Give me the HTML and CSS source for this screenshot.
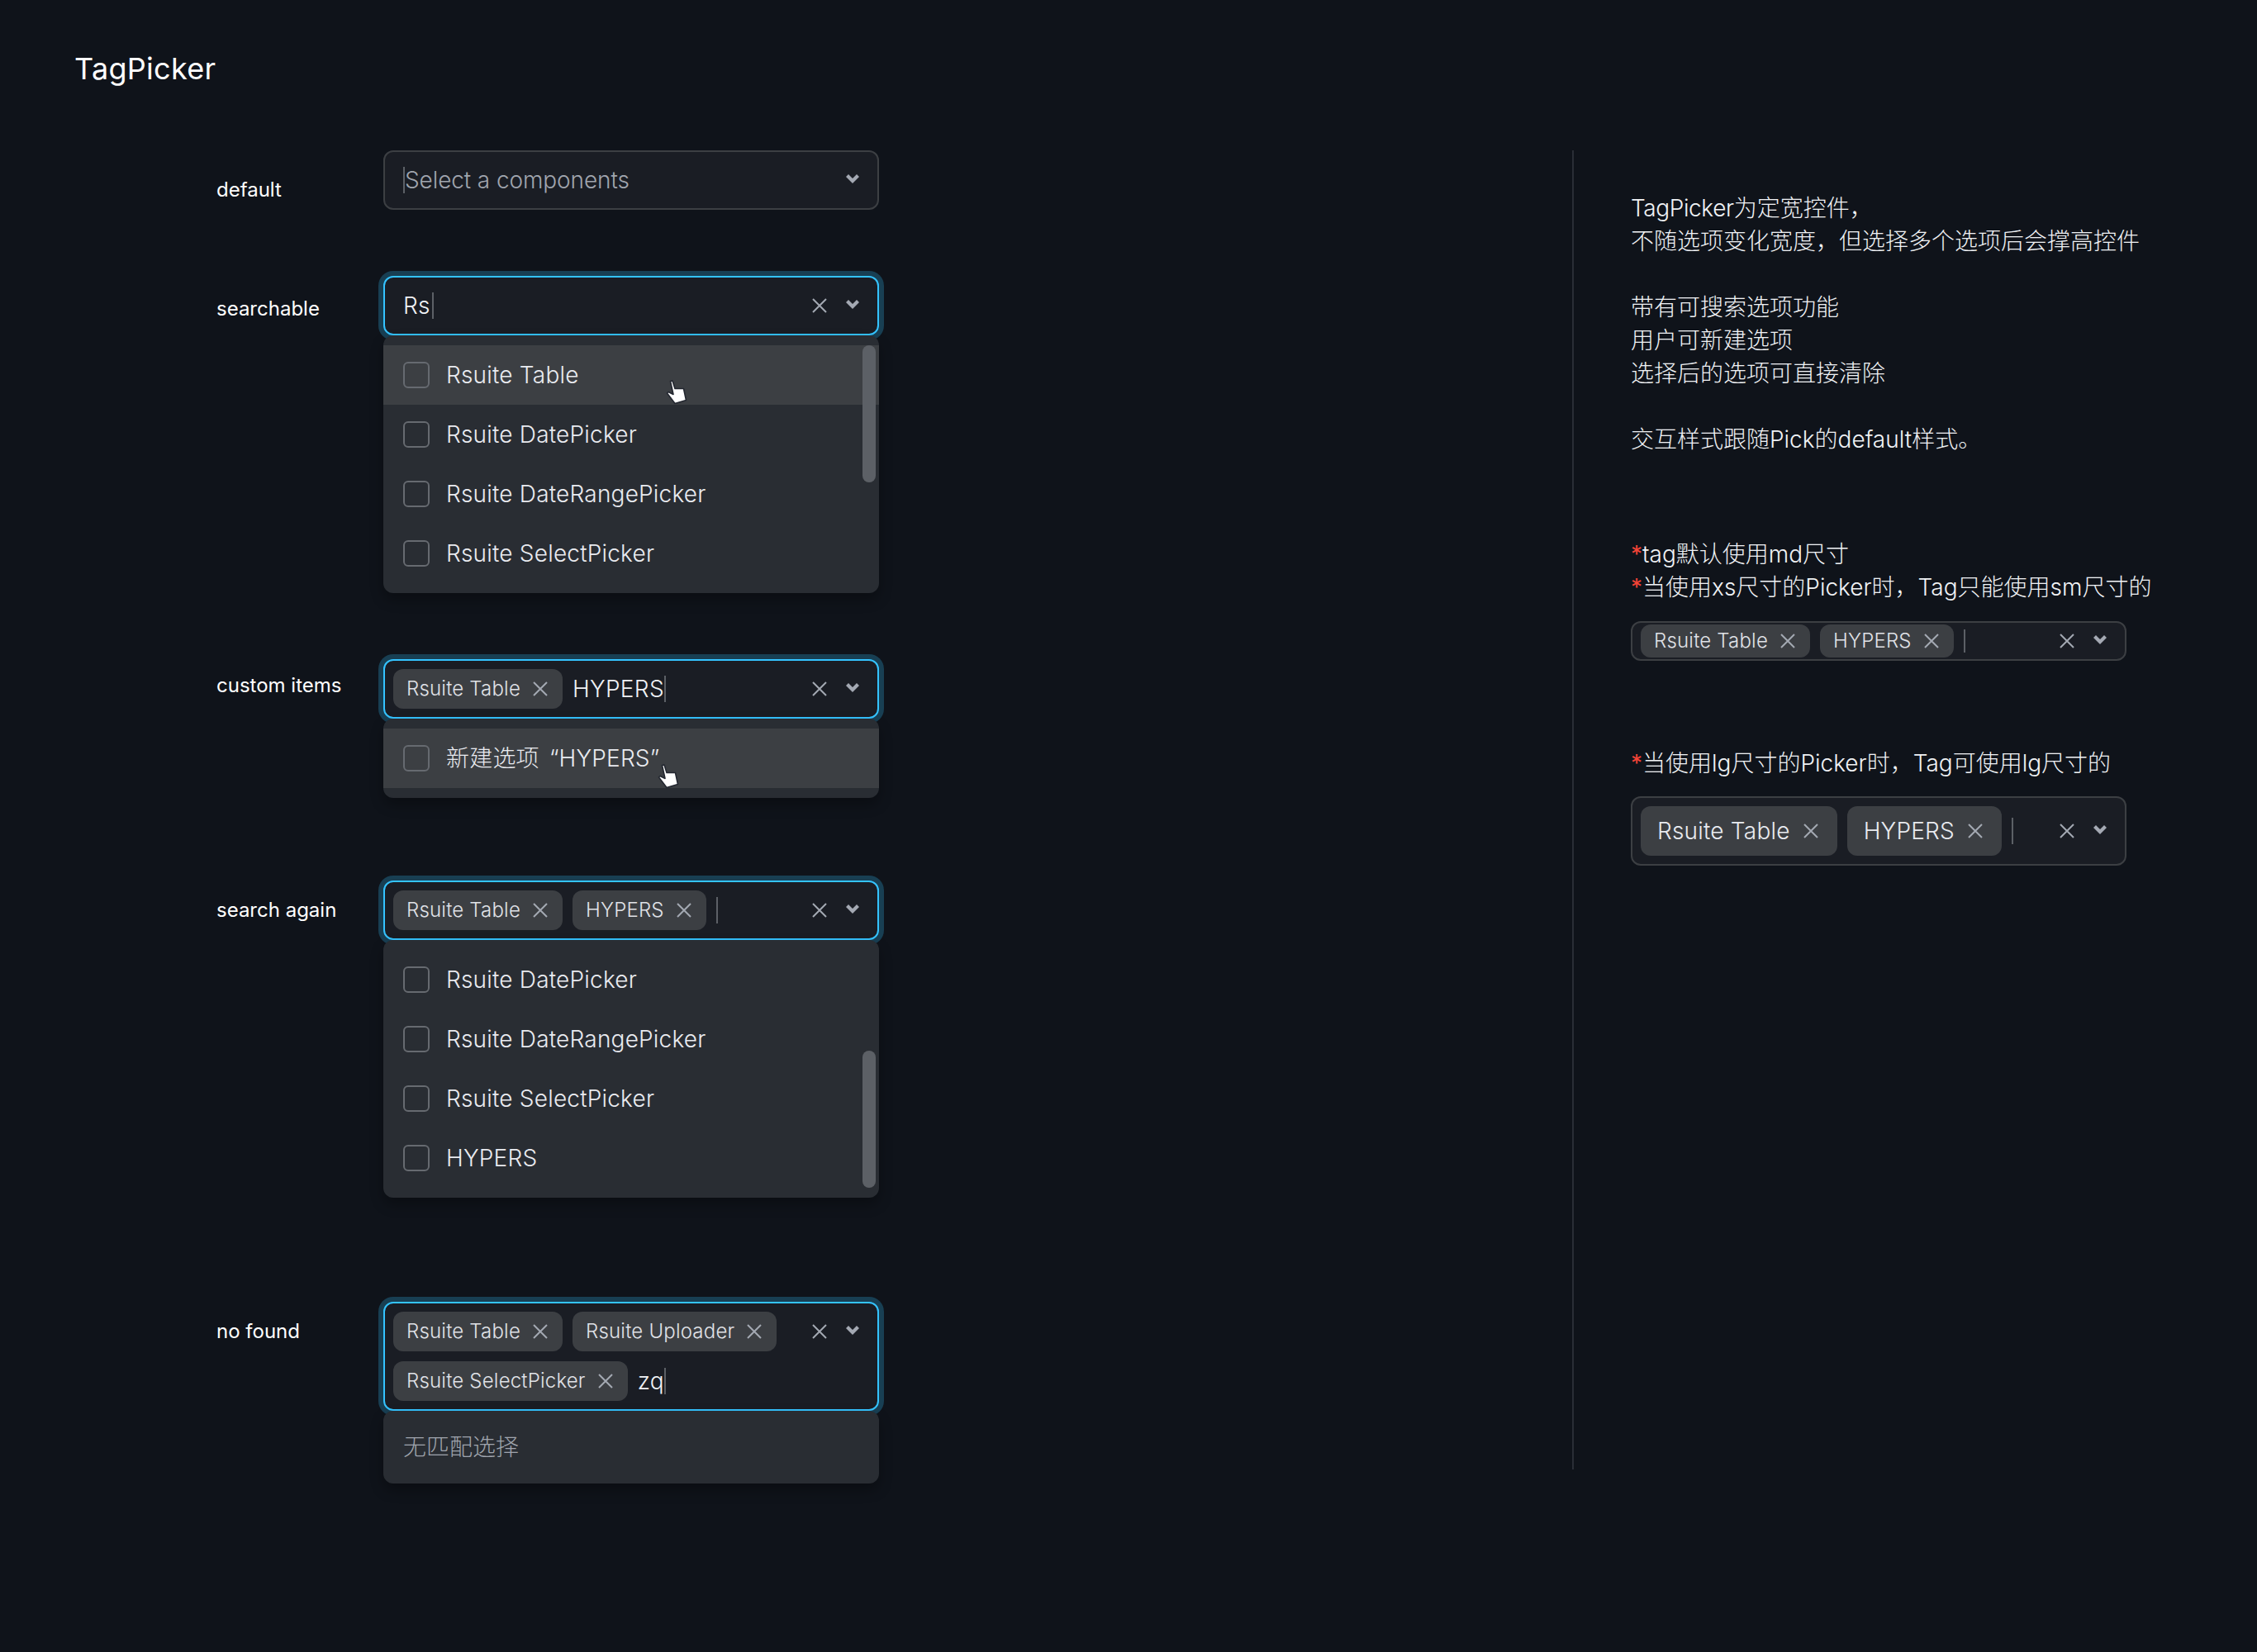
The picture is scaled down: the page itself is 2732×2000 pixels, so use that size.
FILE: index.html
```html
<!DOCTYPE html>
<html lang="zh-CN">
<head>
    <meta charset="utf-8" />
    <title>TagPicker</title>
    <link rel="stylesheet" href="styles.css">
</head>
<body>
    <svg class="icon-defs" width="0" height="0">
        <defs>
            <symbol id="icon-close" viewBox="0 0 18 18"><path d="M1 1 17 17M17 1 1 17" fill="none" stroke="currentColor" stroke-width="2"/></symbol>
            <symbol id="icon-down" viewBox="0 0 16 11"><path d="M0 3 3 0 8 5 13 0 16 3 8 11Z" fill="currentColor"/></symbol>
            <symbol id="icon-hand" viewBox="0 0 26 30"><path d="M5.500 1.500 8 1 11 10.500 21.500 10.500 24.500 24.500 11 28.500 1.500 16 3 14.500 9 17.500Z" fill="#fff" stroke="#232730" stroke-width="1.600" stroke-linejoin="round"/></symbol>
        </defs>
    </svg>

    <h1 class="page-title">TagPicker</h1>

    <main class="content">
        <section class="demos">
            <div class="row row-default">
                <div class="row-label">default</div>
                <div class="row-body">
                    <div class="picker">
                        <div class="picker-value">
                            <span class="caret caret-before"></span><span class="placeholder">Select a components</span>
                        </div>
                        <div class="picker-actions">
                            <svg class="icon-down"><use href="#icon-down"/></svg>
                        </div>
                    </div>
                </div>
            </div>

            <div class="row row-searchable">
                <div class="row-label">searchable</div>
                <div class="row-body">
                    <div class="picker picker-focus">
                        <div class="picker-value">
                            <span class="typed">Rs</span><span class="caret"></span>
                        </div>
                        <div class="picker-actions">
                            <svg class="icon-close"><use href="#icon-close"/></svg>
                            <svg class="icon-down"><use href="#icon-down"/></svg>
                        </div>
                    </div>
                    <div class="menu">
                        <div class="option option-hover"><span class="check"></span>Rsuite Table</div>
                        <div class="option"><span class="check"></span>Rsuite DatePicker</div>
                        <div class="option"><span class="check"></span>Rsuite DateRangePicker</div>
                        <div class="option"><span class="check"></span>Rsuite SelectPicker</div>
                        <div class="scroll-thumb scroll-top"></div>
                        <svg class="hand hand-one"><use href="#icon-hand"/></svg>
                    </div>
                </div>
            </div>

            <div class="row row-custom">
                <div class="row-label">custom items</div>
                <div class="row-body">
                    <div class="picker picker-focus">
                        <div class="picker-value">
                            <span class="tag">Rsuite Table<svg class="icon-close"><use href="#icon-close"/></svg></span>
                            <span class="typed-wrap"><span class="typed">HYPERS</span><span class="caret"></span></span>
                        </div>
                        <div class="picker-actions">
                            <svg class="icon-close"><use href="#icon-close"/></svg>
                            <svg class="icon-down"><use href="#icon-down"/></svg>
                        </div>
                    </div>
                    <div class="menu">
                        <div class="option option-hover option-new"><span class="check"></span>新建选项 “HYPERS”</div>
                        <svg class="hand hand-two"><use href="#icon-hand"/></svg>
                    </div>
                </div>
            </div>

            <div class="row row-again">
                <div class="row-label">search again</div>
                <div class="row-body">
                    <div class="picker picker-focus">
                        <div class="picker-value">
                            <span class="tag">Rsuite Table<svg class="icon-close"><use href="#icon-close"/></svg></span>
                            <span class="tag">HYPERS<svg class="icon-close"><use href="#icon-close"/></svg></span>
                            <span class="typed-wrap"><span class="caret"></span></span>
                        </div>
                        <div class="picker-actions">
                            <svg class="icon-close"><use href="#icon-close"/></svg>
                            <svg class="icon-down"><use href="#icon-down"/></svg>
                        </div>
                    </div>
                    <div class="menu">
                        <div class="option"><span class="check"></span>Rsuite DatePicker</div>
                        <div class="option"><span class="check"></span>Rsuite DateRangePicker</div>
                        <div class="option"><span class="check"></span>Rsuite SelectPicker</div>
                        <div class="option"><span class="check"></span>HYPERS</div>
                        <div class="scroll-thumb scroll-bottom"></div>
                    </div>
                </div>
            </div>

            <div class="row row-nofound">
                <div class="row-label">no found</div>
                <div class="row-body">
                    <div class="picker picker-focus">
                        <div class="picker-value">
                            <span class="tag">Rsuite Table<svg class="icon-close"><use href="#icon-close"/></svg></span>
                            <span class="tag">Rsuite Uploader<svg class="icon-close"><use href="#icon-close"/></svg></span>
                            <span class="tag">Rsuite SelectPicker<svg class="icon-close"><use href="#icon-close"/></svg></span>
                            <span class="typed-wrap"><span class="typed">zq</span><span class="caret"></span></span>
                        </div>
                        <div class="picker-actions">
                            <svg class="icon-close"><use href="#icon-close"/></svg>
                            <svg class="icon-down"><use href="#icon-down"/></svg>
                        </div>
                    </div>
                    <div class="menu menu-empty">无匹配选择</div>
                </div>
            </div>
        </section>

        <aside class="notes">
            <p class="note note-intro"><span class="en">TagPicker</span>为定宽控件，<br>不随选项变化宽度，但选择多个选项后会撑高控件</p>
            <p class="note note-block">带有可搜索选项功能<br>用户可新建选项<br>选择后的选项可直接清除</p>
            <p class="note note-block">交互样式跟随Pick的default样式。</p>

            <p class="note note-sizes"><span class="star">*</span>tag默认使用md尺寸<br><span class="star">*</span>当使用xs尺寸的Picker时，Tag只能使用sm尺寸的</p>
            <div class="picker picker-xs">
                <div class="picker-value">
                    <span class="tag tag-sm">Rsuite Table<svg class="icon-close"><use href="#icon-close"/></svg></span>
                    <span class="tag tag-sm">HYPERS<svg class="icon-close"><use href="#icon-close"/></svg></span>
                    <span class="typed-wrap"><span class="caret"></span></span>
                </div>
                <div class="picker-actions">
                    <svg class="icon-close"><use href="#icon-close"/></svg>
                    <svg class="icon-down"><use href="#icon-down"/></svg>
                </div>
            </div>

            <p class="note note-large"><span class="star">*</span>当使用lg尺寸的Picker时，Tag可使用lg尺寸的</p>
            <div class="picker picker-lg">
                <div class="picker-value">
                    <span class="tag tag-lg">Rsuite Table<svg class="icon-close"><use href="#icon-close"/></svg></span>
                    <span class="tag tag-lg">HYPERS<svg class="icon-close"><use href="#icon-close"/></svg></span>
                    <span class="typed-wrap"><span class="caret"></span></span>
                </div>
                <div class="picker-actions">
                    <svg class="icon-close"><use href="#icon-close"/></svg>
                    <svg class="icon-down"><use href="#icon-down"/></svg>
                </div>
            </div>
        </aside>
    </main>
</body>
</html>
```

FILE: styles.css
```css
*{
    box-sizing: border-box;
}
body{
    margin: 0;
    min-height: 2000px;
    background: #0f131a;
    color: #e9ebf0;
    font-family: "Inter", "Noto Sans CJK SC", sans-serif;
    font-size: 28px;
    line-height: 40px;
    font-weight: 300;
}
.icon-defs{
    position: absolute;
}
.page-title{
    margin: 0;
    padding: 60px 0 0 90px;
    height: 182px;
    font-size: 36px;
    line-height: 46px;
    font-weight: 400;
    letter-spacing: .3px;
    color: #fff;
}
.content{
    display: flex;
    padding-left: 262px;
}
.demos{
    flex: 0 0 1641px;
}
.row{
    display: flex;
    align-items: flex-start;
}
.row-label{
    width: 202px;
    font-size: 24px;
    line-height: 32px;
    font-weight: 400;
    color: #fff;
}
.row-body{
    width: 600px;
}
.row-default .row-label{ padding-top: 32px; }
.row-searchable{ margin-top: 80px; }
.row-searchable .row-label{ padding-top: 24px; }
.row-custom{ margin-top: 80px; }
.row-custom .row-label{ padding-top: 16px; }
.row-again{ margin-top: 100px; }
.row-again .row-label{ padding-top: 20px; }
.row-nofound{ margin-top: 126px; }
.row-nofound .row-label{ padding-top: 20px; }

/* picker */
.picker{
    display: flex;
    align-items: flex-start;
    padding: 10px;
    border: 2px solid #3c3f43;
    border-radius: 12px;
    background: #1a1d24;
}
.picker-focus{
    border-color: #34c3ff;
    box-shadow: 0 0 0 6px rgba(52,195,255,.25);
}
.picker-value{
    flex: 1;
    display: flex;
    flex-wrap: wrap;
    align-items: center;
    gap: 12px;
    min-height: 48px;
    padding-right: 20px;
}
.picker-value > .caret-before, .picker-value > .placeholder{
    margin-right: -12px;
}
.picker-value > .typed{
    margin-right: -10px;
}
.picker-value > .caret:first-child, .picker-value > .typed:first-child{
    margin-left: 12px;
}
.placeholder{
    color: #a0a5ae;
    font-size: 28px;
    letter-spacing: -.1px;
}
.typed{
    color: #f0f2f5;
    letter-spacing: .3px;
}
.typed-wrap{
    display: flex;
    align-items: center;
    height: 48px;
}
.caret{
    display: inline-block;
    width: 2px;
    height: 32px;
    background: #5c6066;
}
.picker-actions{
    display: flex;
    align-items: center;
    gap: 23px;
    height: 48px;
    padding-right: 12px;
    color: #a4a9b3;
}
.icon-close{
    width: 18px;
    height: 18px;
}
.icon-down{
    width: 16px;
    height: 11px;
    margin-top: -4px;
}

/* tags */
.tag{
    display: inline-flex;
    align-items: center;
    gap: 15px;
    height: 48px;
    padding: 0 18px 0 16px;
    border-radius: 12px;
    background: #3c3f43;
    color: #e0e2e7;
    font-size: 24px;
    letter-spacing: .2px;
    white-space: nowrap;
}
.tag .icon-close{
    color: #a4a9b3;
}
.tag-sm{
    height: 40px;
}
.tag-lg{
    height: 60px;
    font-size: 28px;
    padding: 0 23px 0 20px;
    gap: 16px;
    color: #e9ebf0;
}

/* drop menu */
.menu{
    position: relative;
    padding: 12px 0;
    border-radius: 12px;
    background: #292d33;
    box-shadow: 0 8px 16px rgba(0,0,0,.3);
}
.option{
    display: flex;
    align-items: center;
    gap: 20px;
    height: 72px;
    padding-left: 24px;
    color: #e9ebf0;
    letter-spacing: .2px;
}
.option-hover{
    background: #3c3f43;
}
.option-new{
    word-spacing: 4px;
}
.check{
    width: 32px;
    height: 32px;
    border: 2px solid #666a70;
    border-radius: 6px;
}
.menu-empty{
    height: 88px;
    padding: 24px;
    color: #a0a5ae;
}
.scroll-thumb{
    position: absolute;
    right: 4px;
    width: 16px;
    border-radius: 8px;
    background: #5c6066;
}
.scroll-top{
    top: 12px;
    height: 166px;
}
.scroll-bottom{
    top: 134px;
    height: 166px;
}
.hand{
    position: absolute;
    width: 26px;
    height: 30px;
}
.hand-one{
    left: 342px;
    top: 54px;
}
.hand-two{
    left: 332px;
    top: 55px;
}

/* right hand notes */
.notes{
    width: 700px;
    height: 1597px;
    padding: 50px 0 0 69px;
    border-left: 2px solid #2a2e36;
    color: #f0f2f5;
}
.note{
    margin: 0;
    white-space: nowrap;
}
.note .en{
    letter-spacing: -.4px;
}
.note-block{
    margin-top: 40px;
}
.note-sizes{
    margin-top: 99px;
}
.note-large{
    margin-top: 104px;
}
.star{
    color: #f44336;
    font-weight: 400;
}
.picker-xs{
    width: 600px;
    height: 48px;
    margin-top: 21px;
    padding: 2px 10px;
}
.picker-xs .picker-actions, .picker-xs .typed-wrap{
    height: 40px;
}
.picker-xs .picker-value{
    min-height: 40px;
}
.picker-xs .caret{
    height: 28px;
}
.picker-lg{
    width: 600px;
    height: 84px;
    margin-top: 20px;
}
.picker-lg .picker-actions, .picker-lg .typed-wrap{
    height: 60px;
}
.picker-lg .picker-value{
    min-height: 60px;
}
```
